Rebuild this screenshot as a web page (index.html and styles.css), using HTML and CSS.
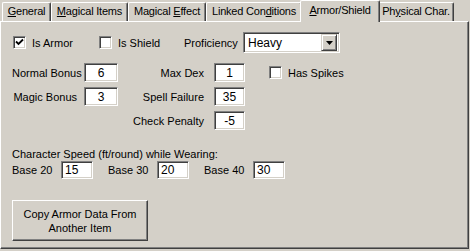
FILE: index.html
```html
<!DOCTYPE html>
<html lang="en">
  <head>
    <meta charset="UTF-8" />
    <title>Armor/Shield</title>
    <link rel="stylesheet" href="styles.css">
  </head>
  <body>
    <div class="dialog">
      <div class="tabs">
        <div class="tab t-general"><u>G</u>eneral</div>
        <div class="tab t-items"><u>M</u>agical Items</div>
        <div class="tab t-effect">Magical <u>E</u>ffect</div>
        <div class="tab t-linked">Linked Con<u>d</u>itions</div>
        <div class="tab active t-armor"><u>A</u>rmor/Shield</div>
        <div class="tab t-phys">Ph<u>y</u>sical Char.</div>
      </div>

      <div class="panel">
        <div class="row-top">
          <label class="check w-armor">
            <span class="box">
              <svg width="9" height="9" viewBox="0 0 9 9"><path d="M1 3.5 L3.5 6 L8 1.5" fill="none" stroke="#000" stroke-width="1.8"/></svg>
            </span>
            Is Armor
          </label>
          <label class="check w-shield"><span class="box"></span>Is Shield</label>
          <span class="w-prof">Proficiency</span>
          <div class="select">
            <span class="select-text">Heavy</span>
            <span class="drop">
              <svg width="7" height="4" viewBox="0 0 7 4"><path d="M0 0 H7 L3.5 4 Z" fill="#000"/></svg>
            </span>
          </div>
        </div>

        <div class="stats">
          <span class="lbl">Normal Bonus</span>
          <span class="field center">6</span>
          <span class="lbl">Max Dex</span>
          <span class="field small center">1</span>
          <label class="check spikes"><span class="box"></span>Has Spikes</label>

          <span class="lbl">Magic Bonus</span>
          <span class="field center">3</span>
          <span class="lbl">Spell Failure</span>
          <span class="field small center">35</span>
          <span></span>

          <span></span>
          <span></span>
          <span class="lbl">Check Penalty</span>
          <span class="field small center">-5</span>
          <span></span>
        </div>

        <div class="caption">Character Speed (ft/round) while Wearing:</div>
        <div class="speeds">
          <span class="base">Base 20</span>
          <span class="field speed">15</span>
          <span class="base">Base 30</span>
          <span class="field speed">20</span>
          <span class="base">Base 40</span>
          <span class="field speed">30</span>
        </div>

        <button class="copy">Copy Armor Data From<br />Another Item</button>
      </div>
    </div>
  </body>
</html>
```

FILE: styles.css
```css
body {
  margin: 0;
  font-family: "Liberation Sans", Arial, sans-serif;
  font-size: 11px;
  color: #000;
  background-color: #d4d0c8;
  white-space: nowrap;
}

.dialog {
  width: 470px;
  height: 251px;
  background-color: #d4d0c8;
}

/* tab strip */
.tabs {
  display: flex;
  align-items: flex-end;
  height: 21px;
  padding-left: 2px;
}

.tab {
  box-sizing: border-box;
  height: 19px;
  line-height: 17px;
  text-align: center;
  letter-spacing: -0.2px;
  border-top: 1px solid #fff;
  border-left: 1px solid #fff;
  border-right: 1px solid #404040;
  box-shadow: inset -1px 0 #808080;
  border-radius: 2px 2px 0 0;
  background-color: #d4d0c8;
}

.tab.active {
  position: relative;
  z-index: 1;
  height: 22px;
  line-height: 18px;
  margin: 0 -2px -1px -2px;
}

.t-general { width: 49px; }
.t-items { width: 77px; }
.t-effect { width: 78px; }
.t-linked { width: 96px; }
.t-armor { width: 80px; }
.t-phys { width: 76px; }

/* page */
.panel {
  box-sizing: border-box;
  width: 469px;
  height: 228px;
  padding: 10px 0 0 11px;
  border-top: 1px solid #fff;
  border-left: 1px solid #fff;
  border-right: 1px solid #404040;
  border-bottom: 1px solid #404040;
  box-shadow: inset -1px -1px #808080;
}

.check {
  display: flex;
  align-items: center;
  gap: 6px;
}

.box {
  box-sizing: border-box;
  width: 13px;
  height: 13px;
  display: flex;
  align-items: center;
  justify-content: center;
  background-color: #fff;
  border-top: 1px solid #808080;
  border-left: 1px solid #808080;
  border-right: 1px solid #fff;
  border-bottom: 1px solid #fff;
  box-shadow: inset 1px 1px #404040, inset -1px -1px #d4d0c8;
}

.row-top {
  display: flex;
  align-items: center;
  height: 21px;
}

.w-armor { width: 86px; margin-left: 1px; }
.w-shield { width: 85px; }
.w-prof { width: 59px; }

.select {
  box-sizing: border-box;
  width: 97px;
  height: 21px;
  display: flex;
  align-items: center;
  justify-content: space-between;
  padding: 2px;
  background-color: #fff;
  border-top: 1px solid #808080;
  border-left: 1px solid #808080;
  border-right: 1px solid #fff;
  border-bottom: 1px solid #fff;
  box-shadow: inset 1px 1px #404040, inset -1px -1px #d4d0c8;
}

.select-text {
  font-size: 12px;
  padding-left: 2px;
}

.drop {
  box-sizing: border-box;
  width: 16px;
  height: 17px;
  display: flex;
  align-items: center;
  justify-content: center;
  background-color: #d4d0c8;
  border-top: 1px solid #d4d0c8;
  border-left: 1px solid #d4d0c8;
  border-right: 1px solid #404040;
  border-bottom: 1px solid #404040;
  box-shadow: inset 1px 1px #fff, inset -1px -1px #808080;
}

/* bonus grid */
.stats {
  display: grid;
  grid-template-columns: 72px 34px 96px 31px auto;
  grid-auto-rows: 19px;
  row-gap: 5px;
  align-items: center;
  margin-top: 10px;
}

.lbl {
  text-align: right;
  padding-right: 7px;
}

.stats .lbl:nth-child(5n+3) {
  padding-right: 10px;
}

.field {
  box-sizing: border-box;
  height: 19px;
  display: flex;
  align-items: center;
  padding-left: 3px;
  font-size: 12px;
  background-color: #fff;
  border-top: 1px solid #808080;
  border-left: 1px solid #808080;
  border-right: 1px solid #fff;
  border-bottom: 1px solid #fff;
  box-shadow: inset 1px 1px #404040, inset -1px -1px #d4d0c8;
}

.field.center {
  justify-content: center;
  padding-left: 0;
}

.spikes {
  margin-left: 24px;
}

.caption {
  margin-top: 17px;
  line-height: 14px;
}

.speeds {
  display: flex;
  align-items: center;
}

.base {
  width: 49px;
}

.field.speed {
  width: 32px;
  height: 18px;
  margin-right: 15px;
}

.copy {
  box-sizing: border-box;
  display: block;
  width: 136px;
  height: 41px;
  margin-top: 21px;
  padding: 0;
  font-family: inherit;
  font-size: 11px;
  line-height: 14px;
  color: #000;
  background-color: #d4d0c8;
  border-top: 1px solid #fff;
  border-left: 1px solid #fff;
  border-right: 1px solid #404040;
  border-bottom: 1px solid #404040;
  box-shadow: inset -1px -1px #808080;
}
```
